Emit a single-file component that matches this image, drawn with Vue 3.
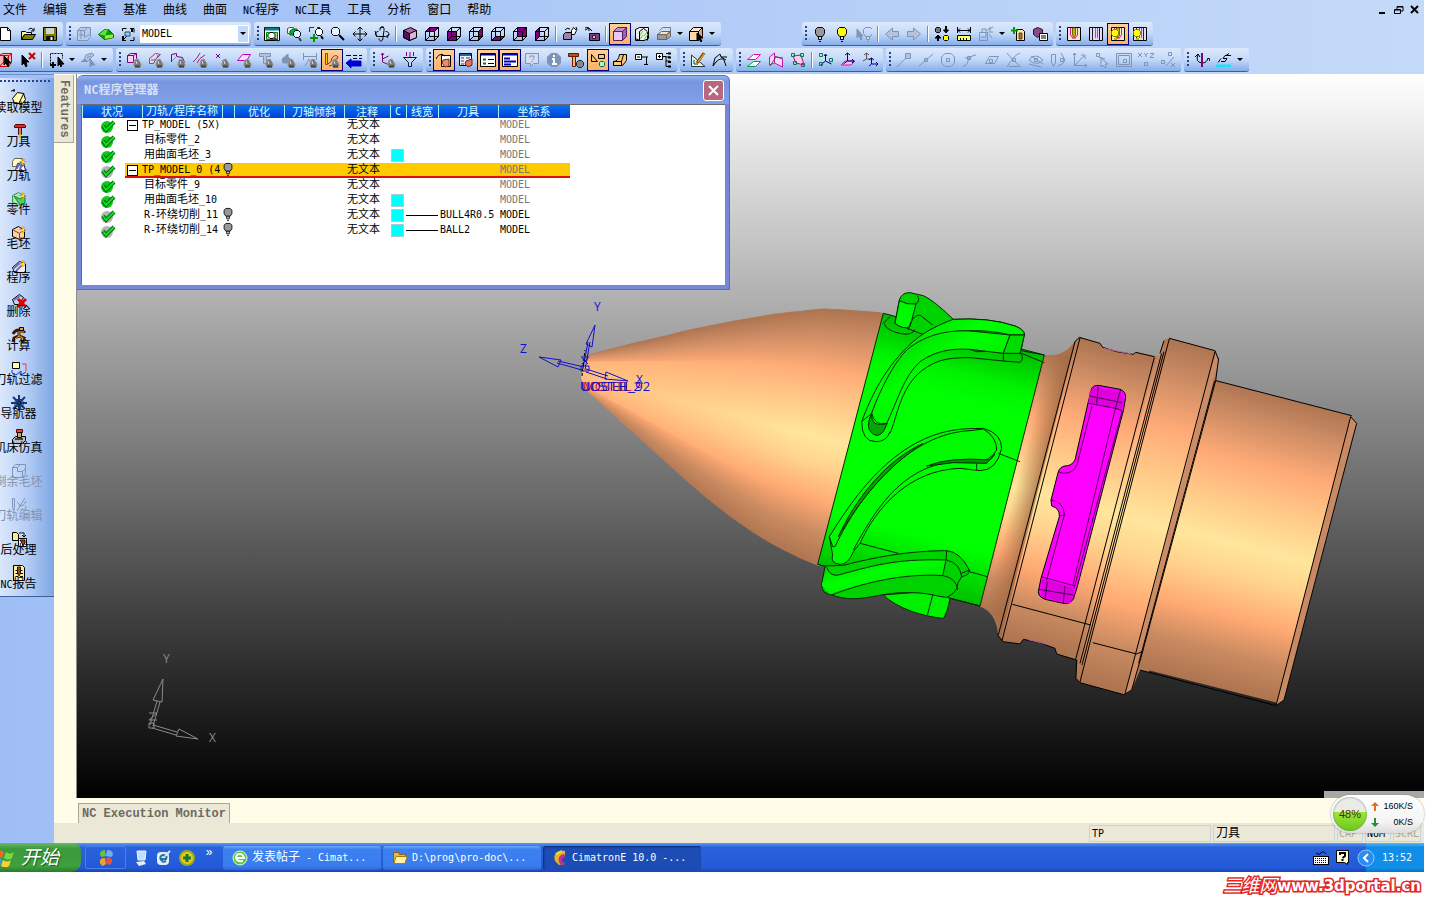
<script setup>
import { ref, h } from 'vue';

// Latin runs use a half-width mono face next to full-width Chinese glyphs
const Mix = (props) => props.t.split(/([\x20-\x7e]+)/).filter(Boolean)
  .map((s) => h('span', { class: /[\x20-\x7e]/.test(s) ? 'lat' : 'cjk' }, s));
Mix.props = ['t'];

const menus = ['文件', '编辑', '查看', '基准', '曲线', '曲面', 'NC程序', 'NC工具', '工具', '分析', '窗口', '帮助'];
const ucs = ref('MODEL');

// --- Icons (16x16) ---
const p = (d, fill = 'none', stroke = '#000', w = 1) =>
  `<path d="${d}" fill="${fill}" stroke="${stroke}" stroke-width="${w}"/>`;
const V = '#800080';
const G = '#7f93b8';
const FRONT = 'M1.5 5.5h9v9h-9z';
const TOP = 'M1.5 5.5l4-4h9l-4 4z';
const SIDE = 'M10.5 5.5l4-4v9l-4 4z';
const BACK = 'M5.5 1.5h9v9h-9z';
const LEFT = 'M1.5 5.5l4-4v9l-4 4z';
const BOTTOM = 'M1.5 14.5l4-4h9l-4 4z';
const wire = (face) => p(face, V) + p(FRONT + TOP + SIDE) + p('M5.5 1.5v9h9M5.5 10.5l-4 4');
const solid = (a, b, c, s = '#000') => p(FRONT, a, s) + p(TOP, b, s) + p(SIDE, c, s);
const tip = p('M9 8l3-1 3 5v2l-1 1.500H9.500L8 14v-2z', '#777', '#999') + p('M9 14.500h5', 'none', '#444', 2) + p('M10 9l1 3', 'none', '#ddd');
const bulb = (c, s = '#000') =>
  p('M5.5 1.5h5l2 2v4l-2 3h-5l-2-3v-4z', c, s) + p('M6.5 10.5h3v3h-3z', '#ddd', s) + p('M7 15.5h2', 'none', s);
const smallBulb = p('M1.5 5.5l2-2h3l2 2v3l-2 2h-3l-2-2z', '#ffff00', '#887700') + p('M4 13h3', 'none', '#bb0', 2);
const star = p('M12 1v7M8.5 4.5h7M10 2l4 5M14 2l-4 5', 'none', '#ff9800') + p('M11 4h2v2h-2z', '#ffee00', 'none');
const dot = (x, y, c = G) => p(`M${x - 1.5} ${y - 1.5}h3v3h-3z`, 'none', c);
const lens = p('M3.5 1.5h4l2 2v4l-2 2h-4l-2-2v-4z', '#e8f2ff') + p('M9 9l5 5', 'none', '#000', 2);

const icons = {
  new: p('M2.5 1.5h7l3 3v10h-10z', '#fff') + p('M9.5 1.5v3h3'),
  open: p('M1.5 13.500v-8h4l1 1h5v2h-7l-3 5z', '#ffff99') + p('M4.5 8.5h11l-3 5h-11z', '#808000') + p('M8.5 3.5q3-3 5 1M14 2v3h-3'),
  save: p('M1.5 1.5h13v13h-13z', '#808000') + p('M4 2h8v6H4z', '#cfd6d0', 'none') + p('M4 10h8v5H4z', '#111', 'none') + p('M9.5 11v3', 'none', '#fff', 2),
  part: p('M1.5 4.5l3-3h10v9l-3 4h-10z', '#b7cbea', G) + p('M1.5 4.5h7l3-3M5 5v8M8.5 4.5v7l5-3M3 9h5', 'none', G),
  load: p('M.5 8.500l6-5h4l5 5v3l-9 2z', '#00a000', '#006400') + p('M1 8.500l6-5h3l-3 6z', '#66e040', 'none') + p('M7 9.500l8-1v3l-8 1.500z', '#a8e830', 'none'),
  swapUcs: p('M2.5 5V2.5h4M14 11v3.5h-4M10 2.5h4v4M6 14.5H2.5v-4M2.5 14.5l4-4') + p('M5 6h5v4H5z', '#9cf', '#345') + p('M12 2v4M3 10v4', 'none', '#000', 2),
  zoomAll: p('M.5 1.5h15v13H.5z', '#fff') + p('M1 3h14', 'none', '#008080', 3) + p('M2.5 6.5h11v7h-11z', '#9edb9e', '#080') + p('M6 6.5h3l2 2v2l-2 2H6l-2-2v-2z', '#fff') + p('M10 12l4 3', 'none', '#333', 2),
  zoomPrev: p('M1.5 2.5l2-1h4l1 2v4h-7z', '#eee', '#555') + p('M4 5l3-2h4v6H4z', '#00b050', '#060') + p('M7.5 6.5l2-2h3l2 2v3l-2 2h-3l-2-2z', '#dff4ff') + p('M13 12l2 3', 'none', '#333', 2),
  zoomWin: p('M1.5 6V1.5H6M9 1.5h3', 'none', '#333') + p('M7.5 4.5l2-2h3l2 2v3l-2 2h-3l-2-2z', '#fff') + p('M13 10l2 3', 'none', '#000', 2) + p('M6 8v8M2 12h8', 'none', '#009a00', 2),
  zoom: lens,
  pan: p('M8 1v14M1 8h14M5.5 3.5L8 1l2.5 2.5M5.5 12.5L8 15l2.5-2.5M3.5 5.5L1 8l2.5 2.5M12.5 5.5L15 8l-2.5 2.5'),
  rotate: p('M6 4.5c-1-5 5-5 4 0l-1 7c0 5-4 4-4 1M4.5 5.5c-4 0-4 5 0 5l7 0c5-1 4-5 0-5M1 5l2 6M13 12l2-4M6 2l4-1'),
  iso: p('M1.5 4.5l7-3 6 3v7l-7 3-6-3z', '#a76aa7') + p('M1.5 4.5l6 3v7l-6-3z', '#5b1060') + p('M7.5 7.5l7-3v7l-7 3z', '#d8b8dc'),
  vTop: wire(TOP), vFront: wire(FRONT), vRight: wire(SIDE), vBottom: wire(BOTTOM), vBack: wire(BACK), vLeft: wire(LEFT),
  viewSave: p('M1.5 8.5l2-2h6v7h-8z', '#a080a8') + p('M9.5 4.5l2-3 3 3-2 4h-3z', '#fff') + p('M3 4q2-3 5-1M14 1l1 3', 'none', '#000'),
  camera: p('M5.5 7.5h10v7h-10z', '#804080') + p('M8.5 9.5h3v3h-3z', '#e0c0e0', '#301030') + p('M1 4l4-2v3M1 2q3-2 7 3'),
  shade: solid('#e8c8f0', '#c090d0', '#a060b0', '#502060'),
  hatch: p('M1.5 3.5l4-2h9v11l-4 2h-9z', '#eee') + p('M1.5 3.5v9l4 2v-9l4-3 4 3v9', 'none') + p('M6 13l3-4M6 9l3-4M10 14l4-6M10 10l4-5', 'none', '#6abf4a'),
  layers: p('M1.5 8.5h9v5h-9z', '#9a9a9a', '#666') + p('M1.5 8.5l4-3h9l-4 3z', '#ffe0c0', '#666') + p('M3.5 4.5l3-3h8v6', 'none', '#777') + p('M10.5 8.5l4-3v5l-4 3z', '#bba088', '#666'),
  pickBox: solid('#ffd8a8', '#ffe8cc', '#d8a878') + p('M9 7v8l2-2 2 3 1-1-2-3h3z', '#000'),
  bulbOff: bulb('#999'), bulbOn: bulb('#ffff00'),
  bulbPick: p('M1 3v9l2-2 2 4 1-1-1-3h2z', G, G) + '<g transform="translate(4 0)">' + bulb('none', G) + '</g>',
  left: p('M1.5 8l7-6v3.5h6v5h-6V14z', '#b5c4dc', G), right: p('M14.5 8l-7-6v3.5h-6v5h6V14z', '#b5c4dc', G),
  bulbSwap: p('M1.5 2.5l1-1h3l1 1v3l-1 1h-3l-1-1z', '#777') + p('M9.5 10.5l1-1h3l1 1v3l-1 1h-3l-1-1z', '#ffff00') + p('M12 0v4M4 10v5', 'none', '#000', 2) + p('M9.5 4h5L12 7zM1 12l3-3 3 3z', '#000'),
  measure: p('M1.5 1v6M14.5 1v6M2 4.5h12M4 2.5L2 4.5l2 2M12 2.5l2 2-2 2') + p('M1.5 9.5h13v5h-13z', '#ffff66') + p('M4.5 12v3M7.5 12v3M10.5 12v3'),
  explode: p('M1.5 6.5h8v8h-8zM4 6V3h4v8H3M9 4l6-3M10 6h5M11 8l3 4M12 1v4', 'none', G),
  addSheet: p('M6.5 3.5h6l2 2v9h-8z', '#ffe8b0') + p('M4 1v7M1 4.5h7', 'none', '#00a000', 2) + p('M9 7h3v6H9z', '#b07030', '#604010'),
  cubeList: p('M1.5 3.5l4-2 5 2v5l-5 3-4-3z', '#8a4a8a', '#301030') + p('M7.5 7.5h8v7h-8z', '#fff') + p('M9 10h5M9 12h5'),
  toolA: p('M1.5 1.5h13v13h-13z', '#f4e8d0') + p('M6.500 2h3v7l-1.500 3-1.500-3z', '#c8b000', '#776600') + p('M4.5 2v7l3 4M11.5 2v7l-3 4', 'none', '#e0109a'),
  toolB: p('M1.5 1.5h13v13h-13z', '#e6d8f8') + p('M4.5 1.5v13M11.5 1.5v13', 'none', '#222') + p('M7.500 2v10M9.5 2v10', 'none', '#c040c0'),
  pickRed: p('M1.5 3.5l3-2h9v9l-3 4h-9z', '#ffb0b0', '#d00000') + p('M1.5 3.5h9v11M1.5 14.5l12-13', 'none', '#d00000') + p('M6 4v9l2-2 2 4 1-1-1-3h3z', '#000'),
  unpick: p('M2 3v10l2-2 2 4 1-1-1-4h3z', '#000') + p('M9 1l6 6M15 1l-6 6', 'none', '#c80000', 2),
  pickWin: '<path d="M2.5 12.5v-11h12v5" fill="none" stroke="#000" stroke-dasharray="2 1"/>' + p('M5 10v6M2 13h6', 'none', '#000', 2) + p('M10 5v9l2-2 1 3 1-3h2z', '#000'),
  pickGray: p('M4 8l2-5 6-2 2 2-7 7-2-1M7 6l4-2', '#b5c4dc', G) + p('M1 10l4-3 3 3M10 7v8l2-2h3z', G, G),
  fSolid: p('M1.5 3.5l3-2h6v5l-3 4h-6z', '#f0d8f4', V) + p('M1.5 3.5h6v6M7.5 3.5l3-2', 'none', V) + tip,
  fFace: p('M1.5 6.5l6-5 5 1-5 5-2 4h-4z', '#ead8f0', '#705080') + p('M3 8q6 1 7-5', 'none', '#705080') + tip,
  fEdge: p('M1.5 10V2.5l5-1v3l6 1 2 5', 'none', V) + p('M2 9l5-5', 'none', '#8090c0') + tip,
  fCurve: p('M1 10q4-3 7-9M5 11q2-5 8-8', 'none', '#a02080') + tip,
  fPoint: p('M2 2l4 4M6 2L2 6', 'none', V) + tip,
  fPlane: p('M1.5 8.5l5-6h8l-4 6z', '#ffe0ff', '#c000c0') + tip,
  fText: p('M1.5 1.5h11v3h-4v7h-3v-7h-4z', '#b5c4dc', G) + tip,
  fHand: p('M2 7l6-5v3l5 4-5 2H3z', G, G) + tip,
  fDim: p('M1.5 1v7M14.5 1v7M2 4.5h12M3 14l4-7 3 7', 'none', G) + tip,
  fPath: p('M1.5 1.5h2v11h-2z', '#fc0', '#744') + p('M4 12q4-2 4-6 5-5 6 0M5 14q6-1 5-6l4-2', 'none', '#803060') + tip,
  fList: p('M0 3.5h5M7 3.5h4M13 3.5h3M7 6.5h4M13 6.5h3', 'none', '#004', 1) + p('M0 11l5-4v2h10v5H5v2z', '#0000d0', '#0000d0'),
  fUcs: p('M2.5 1v9l7 3M1 3l1.5-2L4 3M2.5 7l6-3', 'none', V) + tip,
  funnel: p('M1.5 5.5h13l-5 5v4h-3v-4z', '#ccdcf0', '#113') + p('M4.5 0v4M8 0v5M11.5 0v4', 'none', V),
  ncHand: p('M5.5 3.5h9v11h-9z', '#fff') + p('M0 7q3-6 7-4M5 2l4 2', 'none', '#000') + p('M7 8l6-1v7l-4 1-3-4z', '#e09070', '#802010'),
  ncCalc: p('M1.5 1.5h12v12h-12z', '#eef') + p('M2 3h11', 'none', '#26a', 2) + p('M3 6h3M3 9h3M3 12h3M8 6h4', 'none', '#345') + p('M8 9l6-2v6l-4 2-3-3z', '#e07060', '#802010'),
  panelA: p('M.5 1.5h15v13H.5z', '#fff') + p('M1 2.5h14', 'none', '#000080', 2) + p('M3 7.500h3M3 11.500h3', 'none', '#008000', 2) + p('M8 7.500h6M8 11.500h6', 'none', '#000'),
  panelB: p('M.5 1.5h15v13H.5z', '#fff') + p('M1 2.5h14M2 6.5h6M2 9.5h12M2 12.5h7', 'none', '#0000c0', 2),
  ask: p('M1.5 1.5h13v10h-5l-3 3v-3h-5z', '#d4e0f2', G) + p('M6 5.5V4h4v2.5L8 8M8 9v1.5', 'none', G),
  info: p('M5 1.5h6l3.5 3.5v6L11 14.5H5L1.5 11V5z', G, G) + p('M8 3v2M6 7h2v5M6 12h5', 'none', '#fff', 2),
  hammer: p('M.5 1.5h10v3H.5z', '#c05020', '#601800') + p('M4.5 4.5h3v10h-3z', '#ffb080', '#602000') + p('M10.5 8.5h3l2 2v3l-2 2h-3l-2-2v-3z', '#888', '#222'),
  shapes: p('M1.5 2.5v7h6zM8.5 2.5h6v4h-6z', '#ffc860') + p('M9.5 10.5l1-1h3l1 1v3l-1 1h-3l-1-1z', '#9fc', '#066'),
  wedge: p('M1.5 9.5q5 0 6-7h7v6l-4 5h-9z', '#ffc878') + p('M1.5 9.5h8l2-7M9.5 9.5v4'),
  tree1: p('M1.5 2.5h6v5h-6z', '#fff') + p('M3 5h3M8 5h6M12.5 5v7M10 12.5h4'),
  tree2: p('M.5 1.5h6v6h-6z', '#fff') + p('M2 4.5h3M3.5 3v3M7 4.5h3v10h4M10 1.5h4M10 5h4M10 9h4') + p('M12 1.5h3M12 5.5h3M12 10h3M12 14.5h3', 'none', '#000', 2),
  sketch: p('M1.5 3v11.5H15z', '#dfe', '#333') + p('M4 8v4h4', 'none', '#333') + p('M7 11l7-10', 'none', '#8a4a10', 3) + p('M8 10l6-8', 'none', '#ffcc33'),
  curve: p('M1 14l2-8 5-4 1 3 6 0M1 14l3-4q5-5 8-2l2 6M9 5l5 3'),
  planes: p('M1.5 7.5l6-5h7l-5 5z', '#fff', '#e010a0') + p('M1.5 14.5l6-5h7l-5 5z', '#fff', '#00a040'),
  planeCube: p('M1.5 13V5l5-4v10zM6.5 4l8 3v8l-8-4z', '#f8d8f8', '#d010b0') + p('M2 14l6-9 7 1', 'none', '#008040'),
  planeNet: p('M3 4l8-1 3 10-8-2z', '#fce', '#c000a0') + dot(3, 3, '#008040') + dot(12, 3, '#008040') + dot(5, 11, '#008040') + dot(13, 13, '#008040'),
  ucsA: p('M7.5 2v7l6 3M7.5 9l-5 4M6 4l1.5-2L9 4', 'none', '#000090') + dot(3, 12, '#008040') + dot(13, 8, '#008040') + dot(3, 3, '#008040'),
  ucsB: p('M1 13l4-4h10l-4 4z', '#fbe', '#e010a0') + p('M7.5 1v8h6M7.5 9l-4 3M5 3l2.5-2L10 3M12 7l2 2-2 2', 'none', '#000090'),
  ucsC: p('M4.5 1v6h6M2 3l2.5-2L7 3M4.5 7L1 9', 'none', '#555') + p('M9.5 6v6h6M7 8l2.5-2L12 8M9.5 12L7 14M14 10l2 2-2 2', 'none', '#000090'),
  g1: p('M1 15L10 6', 'none', G) + p('M9.5 1.5h5v5h-5z', '#b5c4dc', G), g2: p('M1 14L15 2', 'none', G) + dot(8, 8),
  g3: p('M5 1.5h6l3.5 3.5v6L11 14.5H5L1.5 11V5z', 'none', G) + dot(8, 8), g4: p('M1 14q4 0 5-5t8-6M3 6h5', 'none', G) + dot(7, 6),
  g5: p('M1.5 11.5l4-7h9l-4 7z', 'none', G) + dot(7, 9), g6: p('M1 1q8 10 14 14M1 15Q8 3 14 1M3 14.500h10', 'none', G) + dot(8, 8),
  g7: p('M1 12l12 3M1 8q6-8 14 0-6 7-14 0M3 4l12 8', 'none', G) + dot(8, 8), g8: p('M1.5 2.5h4v8l-2 4-2-4zM8 14q6-2 7-6l-4-7', 'none', G) + dot(12, 8),
  g9: p('M2.5 1v12.5H15M2.5 13.5L12 4M1 3l1.5-2L4 3M13 12l2 1.5-2 1.5M9 3h4v4', 'none', G), g10: dot(4, 3) + p('M5 5l6 2M7 6v9l2-2 2 3 1-1-1-3h3z', '#c4d2ea', G),
  g11: p('M.5 1.5h15v13H.5zM2.5 3.5h11v9h-11z', 'none', G) + dot(9, 9), g12: p('M0 1l4 4M4 1L0 5M6 1l2 2 2-2M8 3v2M12 1.5h4l-4 4h4', 'none', G) + dot(8, 12),
  g13: dot(3, 10) + dot(10, 2) + p('M6 14l8-9M11 11l4 4M15 11l-4 4', 'none', G),
  spin: p('M4 3q-3 7 4 8 5 0 6-5M1 5l3-3 2 3M13 8l2-2 1 3') + p('M8 1v14', 'none', V, 2),
  steps: p('M5 9.5h4l2-3H7M7 6.5l2-3h6M2 10.5l3-4M10 3.5l3-2') + p('M0 14h15', 'none', '#20e0f8', 3),

  // side bar
  model: p('M1.5 9.5l5-6 6 1 2 6-3 4h-8z', '#ffffb0') + p('M8 14l5-10M0 2l4-1M3 0v3'),
  tool: p('M3.5 2.5l1-1h9l1 1v2h-11z', '#d03020', '#600') + p('M7.5 4.5h3v7h-3z', '#d08060', '#511') + p('M9 11v4', 'none', '#cc0', 2),
  path: p('M1.5 4.5l2-3h8v8h-10z', '#ffffc0', '#665') + p('M4.5 13.5l2-7 6-1 2 8z', '#fff', '#223') + p('M6 12q0-4 5-5M9 13q0-4 4-5', 'none', '#66b', 2) + star,
  piece: p('M1.5 4.5l6-3 6 4v7l-5 2-7-3z', '#a8e8b0', '#395') + p('M3 5l6 3 5-3v7l-5 2z', '#50d060', '#273') + star,
  stock: p('M1.5 4.5l6-3 6 4v7l-5 2-7-3z', '#ffd0a0') + p('M1.5 4.5l7 4v6M8.5 8l5-3', 'none', '#744') + star,
  proc: p('M1.5 8.5l7-6 6 2v9h-11z', '#eee') + p('M2 10l7-6M5 12l6-6', 'none', '#7070c8', 2) + star,
  del: p('M1.5 6.5l7-5 4 3-5 7h-4z', '#d0d0f0') + p('M3 7l6-4', 'none', '#7070c8', 2) + p('M7 6l8 8M15 6l-8 8', 'none', '#e00000', 3),
  run: p('M8 3q-4 0-6 4M8 3q4 3 6 1M8 4v5l5 2-2 4M8 9l-5 2-1 4', 'none', '#3a1a00', 3) + p('M8 4v5l4 2-1 3M8 9l-4 3M9 5l4 0', 'none', '#f0a030') + p('M8.500 .5h4v3h-4z', '#f0a030'),
  filter: p('M1.5 1.5h7v6h-7z', '#ffffb0') + p('M11 3h4v7', 'none', '#d04060') + p('M1 9v3l4 2 5-4v4l5-3', 'none', '#1030d0'),
  helm: p('M8 0v16M0 8h16M2 2l12 12M14 2L2 14', 'none', '#123a7a', 2) + p('M5 4.5h6l1 2v4l-1 1H5l-1-1v-4z', 'none', '#123a7a') + p('M7 7h2v2H7z', '#fff', '#000'),
  machine: p('M1.5 10.5l3-3h10v4l-3 3h-10z', '#bbb') + p('M5.5 .5h6v3h-6z', '#e05030', '#600') + p('M6.5 3.5h4v5h-4z', '#c8a860') + p('M4 9h8v2H4z', '#444', 'none'),
  rest: p('M1.5 4.5l3-3h10v9l-3 4h-10z', 'none', G) + p('M1.5 4.5h5v4h5v6M6.5 4.5l3-3M11.5 8.5l3-3', 'none', G),
  edit: p('M1.5 1.5h2v9l-1 3-1-3zM6 14l8-13M8 9q6 0 7-5M6 5l3 3M10 12q5 2 5-3', 'none', G),
  post: p('M1.5 1.5h4l2 2v6h-6z', '#ffe880') + p('M8 2h5v4M11 4l2 2 2-2M7.5 7.5h8v8h-8z', '#fff') + p('M9 9h5v3l-2 3-1-3z', '#a04020'),
  report: p('M2.5 .5h9l2 2v13h-11z', '#fff0a0') + p('M4.5 5.5h7M4.5 8.5h3M9 8.5h3M4.5 11.5h3M9 11.5h3') + p('M6.500 2h3v6L8 11 6.500 8z', '#905020', '#311'),
};

// "-" separator, "v" drop arrow, "*" prefix for a pressed button
const row1 = [
  { edge: true, items: ['new', 'open', 'save'] },
  { select: true, items: ['part', 'load', 'swapUcs'] },
  { items: ['zoomAll', 'zoomPrev', 'zoomWin', 'zoom', 'pan', 'rotate', '-', 'iso', 'vTop', 'vFront', 'vRight', 'vBottom', 'vBack', 'vLeft', '-', 'viewSave', 'camera', '-', '*shade', 'hatch', 'layers', 'v', 'pickBox', 'v'] },
  { apart: true, items: ['bulbOff', 'bulbOn', 'bulbPick', '-', 'left', 'right', '-', 'bulbSwap', 'measure', 'explode', 'v', 'addSheet', 'cubeList'] },
  { items: ['toolA', 'toolB', '*toolA+', 'toolB+'] },
];
const row2 = [
  { edge: true, items: ['pickRed', 'unpick', '-', 'pickWin', 'v', 'pickGray', 'v'] },
  { items: ['fSolid', 'fFace', 'fEdge', 'fCurve', 'fPoint', 'fPlane', 'fText', 'fHand', 'fDim', '*fPath', 'fList'] },
  { items: ['fUcs', 'funnel'] },
  { items: ['*ncHand', 'ncCalc', '*panelA', '*panelB', 'ask', 'info', 'hammer', '*shapes', 'wedge', 'tree1', 'tree2'] },
  { items: ['sketch', 'curve'] },
  { items: ['planes', 'planeCube', 'planeNet', '-', 'ucsA', 'ucsB', 'ucsC'] },
  { items: ['g1', 'g2', 'g3', 'g4', 'g5', 'g6', 'g7', 'g8', 'g9', 'g10', 'g11', 'g12', 'g13'] },
  { items: ['spin', 'steps', 'v'] },
];
const iconOf = (name) => {
  const id = name.replace('*', '');
  return id.endsWith('+') ? icons[id.slice(0, -1)] + smallBulb : icons[id];
};

const sideItems = [
  ['model', '读取模型'], ['tool', '刀具'], ['path', '刀轨'], ['piece', '零件'], ['stock', '毛坯'],
  ['proc', '程序'], ['del', '删除'], ['run', '计算'], ['filter', '刀轨过滤'], ['helm', '导航器'],
  ['machine', '机床仿真'], ['rest', '剩余毛坯', true], ['edit', '刀轨编辑', true], ['post', '后处理'], ['report', 'NC报告'],
];

// --- Program table ---
const rows = [
  { done: true, tree: true, name: 'TP_MODEL (5X)' },
  { done: true, name: '目标零件_2' },
  { done: true, name: '用曲面毛坯_3', color: true },
  { tree: true, name: 'TP_MODEL_0 (4', lamp: true, selected: true },
  { done: true, name: '目标零件_9' },
  { done: true, name: '用曲面毛坯_10', color: true },
  { name: 'R-环绕切削_11', lamp: true, color: true, line: true, cutter: 'BULL4R0.5' },
  { name: 'R-环绕切削_14', lamp: true, color: true, line: true, cutter: 'BALL2' },
];
const dialogOpen = ref(true);

// --- Nose of the part: thin slices across its axis ---
const profile = [[-6, 16], [0, 22], [30, 37], [60, 52], [90, 68], [130, 87], [168, 104], [214, 121], [245, 127], [280, 133]];
const radius = (u) => {
  const i = Math.max(1, profile.findIndex((q) => q[0] >= u));
  const [a, b] = [profile[i - 1], profile[i]];
  return a[1] + ((b[1] - a[1]) * (u - a[0])) / (b[0] - a[0]);
};
const slices = Array.from({ length: 142 }, (_, i) => ({ u: -6 + i * 2, r: radius(-6 + i * 2) }));

const tasks = [
  { icon: 'ie', text: '发表帖子 - Cimat...' },
  { icon: 'dir', text: 'D:\\prog\\pro-doc\\...' },
  { icon: 'cim', text: 'CimatronE 10.0 -...', active: true },
];
</script>

<template>
  <div class="page">
    <div class="shell">
      <header class="top">
        <nav class="menu">
          <button v-for="m in menus" :key="m" type="button"><Mix :t="m" /></button>
          <div class="win-ctl">
            <button type="button" aria-label="minimize"><svg width="10" height="10"><path d="M1 8h6" stroke="#000" stroke-width="2" /></svg></button>
            <button type="button" aria-label="restore"><svg width="10" height="10"><path d="M3 4V1.5h6V6H7M3 2h6M.5 4.5h6v4h-6zM1 5h6" fill="none" stroke="#000" /></svg></button>
            <button type="button" aria-label="close"><svg width="10" height="10"><path d="M1 1l7 7M8 1l-7 7" stroke="#000" stroke-width="2" /></svg></button>
          </div>
        </nav>
        <div v-for="(row, r) in [row1, row2]" :key="r" class="bars">
          <div v-for="(bar, b) in row" :key="b" class="bar" :class="{ edge: bar.edge, apart: bar.apart }">
            <i v-if="!bar.edge" class="grip"></i>
            <template v-for="(it, k) in bar.items" :key="k">
              <i v-if="it === '-'" class="sep"></i>
              <button v-else-if="it === 'v'" type="button" class="drop" aria-label="more"></button>
              <button v-else type="button" class="tb" :class="{ on: it[0] === '*' }" :aria-label="it.replace('*', '')">
                <svg viewBox="0 0 16 16" width="16" height="16" v-html="iconOf(it)"></svg>
              </button>
            </template>
            <div v-if="bar.select" class="combo">
              <select v-model="ucs" aria-label="UCS"><option>MODEL</option></select>
              <i class="drop"></i>
            </div>
          </div>
        </div>
      </header>

      <div class="body">
        <aside class="side">
          <div class="side-bar">
            <button v-for="[icon, label, off] in sideItems" :key="label" type="button" :class="{ off }">
              <svg viewBox="0 0 16 16" width="16" height="16" v-html="icons[icon]"></svg>
              <span><Mix :t="label" /></span>
            </button>
          </div>
        </aside>

        <div class="work">
          <div class="work-row">
            <div class="features"><button type="button">Features</button></div>
            <main class="canvas">
              <svg class="scene" viewBox="77 74 1347 724">
                <defs>
                  <linearGradient id="skin" x1="0" y1="0" x2="0" y2="1">
                    <stop offset="0" stop-color="#ad7450" /><stop offset=".08" stop-color="#c48660" />
                    <stop offset=".25" stop-color="#ffab77" /><stop offset=".38" stop-color="#ffc988" />
                    <stop offset=".52" stop-color="#ffe69c" /><stop offset=".62" stop-color="#ffd48e" />
                    <stop offset=".76" stop-color="#ffa973" /><stop offset=".88" stop-color="#c98a60" />
                    <stop offset="1" stop-color="#ad7450" />
                  </linearGradient>
                  <linearGradient id="leaf" gradientUnits="userSpaceOnUse" x1="1360" y1="160" x2="1170" y2="915">
                    <stop offset="0" stop-color="#00b800" /><stop offset=".16" stop-color="#00f400" />
                    <stop offset=".25" stop-color="#00ff00" /><stop offset=".8" stop-color="#00ff00" />
                    <stop offset="1" stop-color="#00c000" />
                  </linearGradient>
                  <linearGradient id="fin" x1="0" y1="0" x2="1" y2="1">
                    <stop offset="0" stop-color="#00c800" /><stop offset=".4" stop-color="#00ff00" /><stop offset="1" stop-color="#00d800" />
                  </linearGradient>
                  <linearGradient id="tipShade"><stop offset="0" stop-color="#ffb87c" stop-opacity=".9" /><stop offset="1" stop-color="#ffb87c" stop-opacity="0" /></linearGradient>
                  <linearGradient id="neck" gradientUnits="userSpaceOnUse" x1="445" y1="0" x2="470" y2="0">
                    <stop offset="0" stop-color="#a06840" stop-opacity="0" /><stop offset="1" stop-color="#a06840" stop-opacity=".85" />
                  </linearGradient>
                  <clipPath id="noseClip">
                    <path d="M587 355C640 341 700 325 745 316C800 305 845 304 884 313L819 566C775 549 740 527 690 484L588 392L581 378Z" />
                  </clipPath>
                  <clipPath id="ringClip">
                    <path d="M253 105Q315 112 345 62L358 52L420 70L428 82L470 95L520 103L527 97L600 110L612 60L628 55L765 92L776 120L767 182L1175 287L1190 310L972 1140L948 1157L540 1050L515 1110L492 1124L360 1088L348 1075L352 1020L290 1002L285 985L240 967L190 958L180 972L130 965L115 945Q108 875 58 858Z" />
                  </clipPath>
                </defs>

                <g clip-path="url(#noseClip)">
                  <g transform="translate(585 373) rotate(14.2)">
                    <rect v-for="s in slices" :key="s.u" :x="s.u" :y="-s.r" width="3" :height="s.r * 2" fill="url(#skin)" />
                    <path d="M-6 -10L220 -70V70L-6 10Z" fill="url(#tipShade)" />
                  </g>
                </g>

                <!-- rings and rear cylinder -->
                <g transform="translate(960 320) scale(.33333)" stroke-width="3" fill="none" stroke="#000">
                  <g clip-path="url(#ringClip)" stroke="none">
                    <g transform="translate(-1125 159) rotate(14.2) scale(3)">
                      <rect x="430" y="-180" width="190" height="360" fill="#b37a55" />
                      <rect x="438" y="-134" width="34" height="268" fill="url(#skin)" />
                      <rect x="445" y="-160" width="25" height="320" fill="url(#neck)" />
                      <rect x="468" y="-156" width="88" height="312" fill="url(#skin)" />
                      <rect x="550" y="-178" width="58" height="356" fill="url(#skin)" />
                      <rect x="606" y="-150" width="156" height="300" fill="url(#skin)" />
                    </g>
                  </g>
                  <path d="M768 95L776 120L545 1005L515 1110L495 1122Z" fill="#cb8c66" stroke="none" />
                  <path d="M1172 290L1190 310L972 1140L948 1157Z" fill="#c88a62" />
                  <path d="M345 65L358 52L420 70L428 82L470 95L520 103L527 97L583 110M112 945L130 965L180 972L190 958L240 968L285 985L290 1002L350 1020M768 182L1175 287M540 1050L948 1157" />
                  <path d="M345 65L115 945M360 54L126 962M583 112L347 1018M605 100L360 1030M612 95L366 1035M612 62L600 100M628 56L392 960L360 1086M350 1020L348 1075L360 1088M628 55L765 92L776 120M765 95L495 1122M776 115L767 182M764 182L536 1030M767 182L545 1005L515 1110L492 1124L360 1088" />
                  <path d="M157 853L392 915M398 968L530 1002L550 993" />
                  <path d="M430 85L515 102M205 959L270 975" stroke="#c060a0" />
                  <path d="M395 205Q402 195 415 196L480 208Q497 213 497 232L490 272L352 800L340 838Q330 852 315 851L255 838Q235 830 235 815L243 775L298 590Q300 565 275 558L273 540L295 455Q300 440 315 438Q335 438 345 420L385 245Z" fill="#ff00ff" />
                  <path d="M388 218L398 203L482 213L490 245L484 272L385 250ZM243 775L335 800L345 820L330 850L245 832Z" fill="#df00df" stroke="none" />
                  <path d="M385 250L468 265L490 275M388 228L486 248M415 196L410 250M482 208L465 270L338 798M396 258L352 430Q345 460 310 460L295 455M486 275L342 805M273 540Q312 545 313 585L260 780M313 585L298 588M243 770L345 798M236 808L340 825M262 785L255 838M315 798L310 850" stroke-width="2" />
                </g>

                <!-- bladed section -->
                <g transform="translate(510 280) scale(.33333)" stroke-width="3" fill="none" stroke="#002800">
                  <path d="M1120 100L1603 225L1410 978L923 853Z" fill="url(#leaf)" />
                  <path d="M1120 945C1160 985 1240 1010 1300 1015Q1312 1000 1320 955L1300 930Z" fill="#00f000" />
                  <path d="M1268 945L1252 1006" />
                  <path d="M1155 130L1168 60Q1175 37 1200 38L1240 47Q1270 60 1330 118Q1440 112 1515 138Q1545 150 1543 165L1533 212L1400 215L1230 160Z" fill="#00d200" />
                  <path d="M1155 130L1168 62Q1190 75 1218 72L1200 140Q1180 150 1155 130Z" fill="#00f800" />
                  <path d="M1222 47Q1232 60 1218 72M1120 130L1140 110M1122 130Q1130 155 1180 162Q1205 165 1215 150M1195 150Q1205 105 1230 105L1268 135" />
                  <path d="M1055 425C1090 330 1130 270 1165 230C1200 190 1240 150 1330 118Q1440 112 1515 138Q1545 150 1543 165L1500 165C1450 150 1310 140 1250 180C1170 220 1110 330 1085 400Z" fill="url(#fin)" />
                  <path d="M1085 400C1110 330 1150 250 1190 210C1250 160 1320 150 1380 153L1500 165L1480 220L1380 208C1330 205 1280 210 1230 245C1180 290 1160 370 1130 430Q1095 440 1085 400Z" fill="url(#fin)" />
                  <path d="M1500 165L1543 165L1530 220L1480 220Z" fill="#00dc00" />
                  <path d="M1140 460C1160 420 1170 310 1250 262C1290 235 1330 233 1380 233L1480 243L1530 247Q1545 235 1530 218L1603 248M1480 220L1480 243M1533 212L1603 225" />
                  <path d="M1055 425Q1055 485 1098 485Q1130 485 1140 455" />
                  <path d="M1085 400Q1070 430 1078 450Q1098 480 1120 455L1132 430Q1110 437 1095 430Q1083 420 1085 400Z" fill="#00a800" />

                  <path d="M958 770C1050 620 1180 450 1380 446L1420 445Q1475 460 1475 505Q1460 572 1410 572L1350 565C1200 570 1100 680 1050 790L1030 815Q1015 853 990 853Q960 850 968 825Z" fill="#00fa00" />
                  <path d="M975 800C1050 640 1200 460 1380 452L1420 447Q1460 470 1460 510Q1440 545 1400 545L1330 545C1170 560 1090 700 1030 810" />
                  <path d="M985 770C1040 650 1130 540 1240 490C1130 560 1050 660 985 770Z" fill="#00a000" />
                  <path d="M1250 558Q1320 530 1440 540L1455 522L1430 550L1330 548Z" fill="#009000" />
                  <path d="M958 770L968 800L975 800M1465 520L1530 545M1400 550L1400 570M1050 790L1165 820" />

                  <path d="M945 858L935 915Q935 940 965 945C1050 975 1100 935 1200 938C1260 938 1280 950 1310 952Q1345 935 1343 910L1355 890Q1380 885 1378 870Q1350 815 1310 812C1200 812 1100 830 1000 856Z" fill="#00d200" />
                  <path d="M950 862Q960 890 985 885C1080 860 1150 835 1310 840L1298 888C1200 880 1080 900 960 942L935 915Z" fill="url(#fin)" stroke="none" />
                  <path d="M950 862Q960 890 985 885C1080 860 1150 835 1310 840Q1350 850 1355 890M965 945C1080 900 1200 880 1300 887Q1340 895 1343 930M1310 812L1308 840L1298 888M1378 875L1432 890M1355 880L1378 870M1310 952L1410 978" />
                </g>

                <!-- part coordinate system -->
                <g fill="none" stroke="#1010c8">
                  <path d="M585 370L590 342M583 368L588 342M595 325L586 344L592 347ZM582 370L557 363M584 367L558 361M539 357L561 360L558 367ZM586 369L608 376M586 372L607 379M606 372L628 381L605 379ZM581 357h8M582 364l6-6M582 358l6 6M581 366h8v5h-8z" />
                  <path d="M582 376L585 350" stroke="#000" stroke-dasharray="3 2" />
                </g>
                <g class="ax" fill="#1010c8">
                  <text x="594" y="311">Y</text><text x="520" y="353">Z</text><text x="636" y="384">X</text>
                  <text x="580" y="391" class="ucs">UCSTEIL_92</text><text x="583" y="391" class="ucs" fill="#c01040">MCSTEL</text><text x="581" y="391" class="ucs">UOST H_2</text>
                </g>

                <!-- view triad -->
                <g fill="none" stroke="#8a8a8a">
                  <path d="M150 725L157 701M153 726L160 702M163 679L153 700L162 702ZM153 725L177 732M152 728L176 735M179 729L198 739L176 736ZM149 723h5v5h-5zM149 713h8l-8 7h8" />
                </g>
                <g class="ax" fill="#8a8a8a"><text x="163" y="663">Y</text><text x="209" y="742">X</text></g>
              </svg>

              <section v-if="dialogOpen" class="dialog">
                <div class="dlg-title">
                  <h1><Mix t="NC程序管理器" /></h1>
                  <button type="button" aria-label="关闭" @click="dialogOpen = false">
                    <svg width="13" height="13"><path d="M2 2l9 9M11 2l-9 9" stroke="#fff" stroke-width="2" /></svg>
                  </button>
                </div>
                <div class="dlg-body">
                  <table>
                    <colgroup>
                      <col class="w43"><col class="w17"><col class="w80"><col class="w12"><col class="w50">
                      <col class="w60"><col class="w46"><col class="w16"><col class="w32"><col class="w60"><col class="w72">
                    </colgroup>
                    <thead>
                      <tr>
                        <th colspan="2">状况</th><th><Mix t="刀轨/程序名称" /></th><th></th><th>优化</th><th>刀轴倾斜</th>
                        <th>注释</th><th><Mix t="C" /></th><th>线宽</th><th>刀具</th><th>坐标系</th>
                      </tr>
                    </thead>
                    <tbody>
                      <tr v-for="row in rows" :key="row.name" :class="{ sel: row.selected }">
                        <td class="st">
                          <svg width="16" height="15" viewBox="0 0 16 15">
                            <circle cx="7" cy="9" r="6" :fill="row.done ? '#10c818' : '#b4b4b4'" />
                            <path d="M3 8l3 4 8-8" fill="none" stroke="#006a10" stroke-width="4" />
                            <path d="M3 8l3 4 8-8" fill="none" stroke="#10e020" stroke-width="2" />
                          </svg>
                        </td>
                        <td><i v-if="row.tree" class="node"></i></td>
                        <td class="nm" :class="{ child: !row.tree }"><Mix :t="row.name" /></td>
                        <td class="lamp"><svg v-if="row.lamp" width="12" height="13" viewBox="2 1 12 15" v-html="icons.bulbOff"></svg></td>
                        <td></td><td></td>
                        <td class="note">无文本</td>
                        <td><i v-if="row.color" class="swatch"></i></td>
                        <td><i v-if="row.line" class="stroke"></i></td>
                        <td class="cut"><Mix :t="row.cutter || ''" /></td>
                        <td class="cs" :class="{ dim: !row.cutter }"><Mix t="MODEL" /></td>
                      </tr>
                    </tbody>
                  </table>
                </div>
              </section>
            </main>
          </div>
          <div class="monitor"><button type="button">NC Execution Monitor</button></div>
          <div class="status">
            <span class="wide"><Mix t="TP" /></span><span class="wide">刀具</span>
            <span class="key off"><Mix t="CAP" /></span><span class="key"><Mix t="NUM" /></span><span class="key off"><Mix t="SCRL" /></span>
          </div>
        </div>

        <div class="net">
          <b>48%</b>
          <div>
            <p><svg width="8" height="9"><path d="M0 4l4-4 4 4H5v5H3V4z" fill="#e07028" /></svg>160K/S</p>
            <p><svg width="8" height="9"><path d="M0 5l4 4 4-4H5V0H3v5z" fill="#2a8a3a" /></svg>0K/S</p>
          </div>
        </div>
      </div>

      <footer class="taskbar">
        <button type="button" class="start">
          <svg width="17" height="18" viewBox="0 0 17 18">
            <path d="M0 3q4-3 7 0L5 9Q2 6-2 9z" fill="#f06a30" /><path d="M9 3q4 3 8 0l-2 6q-4 3-8 0z" fill="#7ad840" />
            <path d="M-2 11q4-3 7 0l-2 6q-3-2-6 0z" fill="#4a90f8" /><path d="M6 11q4 3 8 0l-2 6q-3 3-8 0z" fill="#ffd030" />
          </svg>
          <em>开始</em>
        </button>
        <button type="button" class="quick" aria-label="msn">
          <svg width="18" height="18" viewBox="0 0 18 18"><path d="M8 1c-5 0-7 5-3 7l4-1z" fill="#6ac040" /><path d="M10 1c5-1 8 5 4 7l-5-1z" fill="#70b0f8" /><path d="M8 9c-6-1-7 6-2 8l3-2z" fill="#f0a030" /><path d="M10 8c6 0 7 6 2 8l-3-2z" fill="#e85040" /></svg>
        </button>
        <div class="launch">
          <svg width="16" height="16" viewBox="0 0 16 16"><path d="M4 1h9l-1 9H5z" fill="#bfe0ff" stroke="#e8f4ff" /><path d="M3 12l8-1 2 3-7 2z" fill="#e8eef8" /></svg>
          <svg width="16" height="16" viewBox="0 0 16 16"><rect x="1" y="2" width="12" height="13" rx="4" fill="#e0f0f8" /><path d="M5 10q-2-4 2-5 5 0 3 4H5q1 4 5 2" fill="none" stroke="#2070a0" stroke-width="2" /><path d="M9 6l5-5" stroke="#d8e8f8" stroke-width="2" /></svg>
          <svg width="16" height="16" viewBox="0 0 16 16"><circle cx="8" cy="8" r="7" fill="#f0c818" stroke="#90b020" stroke-width="2" /><path d="M8 4v8M4 8h8" stroke="#187830" stroke-width="3" /></svg>
        </div>
        <span class="more">»</span>
        <button v-for="t in tasks" :key="t.icon" type="button" class="task" :class="{ active: t.active }">
          <svg v-if="t.icon === 'ie'" width="16" height="16" viewBox="0 0 16 16"><circle cx="8" cy="8" r="7" fill="#5cc840" stroke="#d8ffd0" /><path d="M4 8h8q-1-4-4-4-4 0-4 4 1 4 7 3" fill="none" stroke="#fff" stroke-width="2" /></svg>
          <svg v-else-if="t.icon === 'dir'" width="16" height="16" viewBox="0 0 16 16"><path d="M1.5 2.5h5l1 2h6v9h-12z" fill="#e8b840" stroke="#8a6410" /><path d="M2 13.5l2-7h11l-2 7z" fill="#fff0a0" stroke="#a87a18" /></svg>
          <svg v-else width="16" height="16" viewBox="0 0 16 16"><path d="M13 1C4 0 1 5 3 11l4 4 6-1c-6-2-6-6 0-9z" fill="#f0b020" /><path d="M12 4C6 5 5 11 9 15l5-1c-5-2-5-5-1-7z" fill="#c03090" /><path d="M4 4l6-3" stroke="#d8e040" stroke-width="2" /></svg>
          <span><Mix :t="t.text" /></span>
        </button>
        <div class="tray-icons">
          <svg width="16" height="14"><path d="M3 2q3 3 5 0t5 1" fill="none" stroke="#000" /><rect x=".5" y="5.5" width="15" height="8" fill="#fff" stroke="#000" /><path d="M2 7.5h12M2 9.5h12M2 11.5h12" stroke="#000" stroke-dasharray="1 1" /></svg>
          <svg width="14" height="15"><path d="M.5 .5h12v12h-1v2l-3-2h-8z" fill="#ffffe0" stroke="#000" /><path d="M4 5V3h5v3L6.5 8M6.5 9v2" fill="none" stroke="#000" stroke-width="2" /></svg>
        </div>
        <div class="tray">
          <button type="button" aria-label="hidden icons"><svg width="18" height="18"><circle cx="9" cy="9" r="8" fill="#2a8cf0" stroke="#8ac8ff" /><path d="M11 5L7 9l4 4" fill="none" stroke="#fff" stroke-width="2" /></svg></button>
          <time>13:52</time>
        </div>
      </footer>
    </div>
    <div class="mark"><i>三维网</i><b>www.3dportal.cn</b></div>
  </div>
</template>

<style>
body {
  margin: 0;
  background: #fff;
}

.lat {
  font-family: "DejaVu Sans Mono", monospace;
  font-size: 10px;
  white-space: pre;
}
</style>

<style scoped>
.page {
  min-height: 100vh;
  display: flex;
  flex-direction: column;
  font: 12px/15px "Liberation Sans", "Noto Sans CJK SC", sans-serif;
  color: #000;
  overflow: hidden;
}

button {
  border: 0;
  padding: 0;
  margin: 0;
  background: none;
  font: inherit;
  color: inherit;
}

svg {
  display: block;
  flex: none;
}

.shell {
  flex: 1;
  margin-right: 16px;
  display: flex;
  flex-direction: column;
  background: linear-gradient(90deg, #9ebef5, #c4daf9);
}

/* --- menu and tool bars --- */
.menu {
  display: flex;
  gap: 16px;
  height: 22px;
  align-items: center;
  padding: 0 4px 2px 3px;
  box-sizing: border-box;
}

.win-ctl {
  margin-left: auto;
  display: flex;
  gap: 6px;
}

.bars {
  display: flex;
  gap: 3px;
  height: 26px;
}

.bar {
  display: flex;
  align-items: center;
  height: 24px;
  box-sizing: border-box;
  padding-right: 2px;
  border-radius: 3px;
  border-bottom: 1px solid #3b619c;
  background: linear-gradient(#dde9fc, #c3d9f8 50%, #86aeea);
}

.bar.edge {
  margin-left: -5px;
}

.bar.apart {
  margin-left: 78px;
}

.grip {
  width: 2px;
  height: 16px;
  margin: 0 2px 0 3px;
  background: repeating-linear-gradient(#27418a 0 2px, transparent 2px 4px);
}

.sep {
  width: 1px;
  height: 16px;
  margin: 0 2px;
  background: #6a8ccb;
  border-right: 1px solid #fff;
}

.tb {
  width: 22px;
  height: 22px;
  display: flex;
  align-items: center;
  justify-content: center;
  box-sizing: border-box;
}

.tb.on {
  border: 1px solid #000080;
  background: linear-gradient(#ffd099, #ffb060);
}

.drop {
  width: 10px;
  height: 22px;
  display: flex;
  align-items: center;
  justify-content: center;
}

.drop:last-child {
  margin-right: 2px;
}

.drop::after {
  content: "";
  border: 3px solid transparent;
  border-top-color: #000;
  border-bottom: 0;
}

.combo {
  display: flex;
  height: 18px;
  width: 109px;
  margin-left: 1px;
  background: #fff;
}

.combo select {
  appearance: none;
  flex: 1;
  border: 0;
  padding: 0 2px;
  background: #fff;
  color: #000;
  font: 10px "DejaVu Sans Mono", monospace;
}

.combo .drop {
  height: 16px;
  margin: 1px;
  background: #c3d9f8;
}

/* --- body --- */
.body {
  flex: 1;
  display: flex;
  position: relative;
}

.side {
  width: 54px;
  flex: none;
  overflow: hidden;
  border-top: 1px solid #6f8fc8;
  box-sizing: border-box;
}

.side-bar {
  margin: 3px 0 0;
  padding: 11px 17px 0 0;
  background: linear-gradient(90deg, #dbe8fc, #b4cdf6 50%, #7ea6e4);
  border-bottom: 1px solid #3b619c;
  position: relative;
}

.side-bar::before {
  content: "";
  position: absolute;
  left: 0;
  right: 4px;
  top: 2px;
  height: 2px;
  background: repeating-linear-gradient(90deg, #27418a 0 2px, transparent 2px 4px);
}

.side-bar button {
  width: 37px;
  height: 34px;
  display: flex;
  flex-direction: column;
  align-items: center;
  white-space: nowrap;
}

.side-bar button:last-child {
  height: 31px;
}

.side-bar button span {
  margin-top: -6px;
  line-height: 18px;
}

.side-bar .off {
  color: #8592ad;
}

.work {
  flex: 1;
  min-width: 0;
  display: flex;
  flex-direction: column;
}

.work-row {
  flex: 1;
  display: flex;
}

.features {
  width: 22px;
  flex: none;
  background: #fffde8;
}

.features button {
  writing-mode: vertical-rl;
  width: 20px;
  padding: 5px 0 4px;
  margin-top: 1px;
  background: #ebe8d8;
  border: solid #a8a698;
  border-width: 0 1px 1px 0;
  color: #6b6a60;
  font: bold 12px "Liberation Mono", monospace;
}

.canvas {
  flex: 1;
  position: relative;
  border-left: 1px solid #8c8c88;
  background: linear-gradient(#fff, #000);
}

.canvas::before {
  content: "";
  position: absolute;
  right: 0;
  bottom: 0;
  width: 100px;
  height: 7px;
  background: #a8a6a6;
}

.scene {
  position: absolute;
  inset: 0;
  width: 100%;
  height: 100%;
}

.ax {
  font: 12px "Open Sans", sans-serif;
}

.ucs {
  font-size: 13px;
}

/* --- program manager window --- */
.dialog {
  position: absolute;
  left: 0;
  top: 1px;
  width: 653px;
  height: 215px;
  display: flex;
  flex-direction: column;
  box-sizing: border-box;
  padding: 0 4px 4px;
  border: 1px solid #5a6cc4;
  border-left: 0;
  border-radius: 6px 6px 0 0;
  background: #7588d8;
}

.dlg-title {
  height: 28px;
  margin: 0 -4px;
  padding: 0 5px 0 7px;
  display: flex;
  align-items: center;
  justify-content: space-between;
  border-radius: 5px 5px 0 0;
  background: linear-gradient(#8fb4f0, #7a95e0 20%, #7d9ee6 80%, #86a0e8);
}

.dlg-title h1 {
  margin: 0;
  font-size: 12px;
  font-weight: bold;
  color: #d4e0fa;
}

.dlg-title h1 :deep(.lat) {
  font-size: 12px;
}

.dlg-title button {
  width: 21px;
  height: 21px;
  display: flex;
  align-items: center;
  justify-content: center;
  box-sizing: border-box;
  border: 1px solid #fff;
  border-radius: 3px;
  background: #b8687e;
}

.dlg-body {
  flex: 1;
  background: #fff;
  border-top: 1px solid #6b6b6b;
  border-left: 1px solid #6b6b6b;
}

table {
  width: 488px;
  table-layout: fixed;
  border-collapse: collapse;
  line-height: 13px;
  font-size: 11px;
}

.w12 { width: 12px; }
.w16 { width: 16px; }
.w17 { width: 17px; }
.w32 { width: 32px; }
.w43 { width: 43px; }
.w46 { width: 46px; }
.w50 { width: 50px; }
.w60 { width: 60px; }
.w72 { width: 72px; }
.w80 { width: 80px; }

th {
  height: 12px;
  padding: 0;
  line-height: 12px;
  font-weight: normal;
  color: #d8ffff;
  background: linear-gradient(#0a74f0, #0040d8);
  box-shadow: inset 1px 0 #a8f0f8;
  white-space: nowrap;
}

td {
  height: 15px;
  padding: 0;
  vertical-align: top;
  white-space: nowrap;
}

td svg {
  overflow: visible;
}

.st svg {
  margin-left: 18px;
}

.node {
  display: block;
  width: 9px;
  height: 9px;
  margin: 2px 0 0 2px;
  border: 1px solid #000;
  background: linear-gradient(#000, #000) center / 7px 1px no-repeat #fff;
}

.nm.child {
  padding-left: 2px;
}

.note {
  padding-left: 3px;
}

.cut,
.cs {
  padding-left: 2px;
}

.cs.dim {
  color: #777;
}

.swatch {
  display: block;
  width: 11px;
  height: 11px;
  margin: 1px 0 0 1px;
  border: 1px solid #9fd0d8;
  background: #00ffff;
}

.stroke {
  display: block;
  height: 1px;
  margin-top: 7px;
  background: #000;
}

.sel td:not(.st) {
  background: #ffcb00;
  box-shadow: inset 0 -2px #e01000;
}

/* --- bottom bars --- */
.monitor {
  height: 25px;
  padding-left: 24px;
  display: flex;
  align-items: flex-end;
  background: #fffde8;
}

.monitor button {
  height: 20px;
  padding: 0 3px;
  background: #ebe8d8;
  border: 1px solid #a8a698;
  border-bottom: 0;
  color: #6b6a60;
  font: bold 12px "Liberation Mono", monospace;
}

.status {
  height: 20px;
  display: flex;
  gap: 2px;
  justify-content: flex-end;
  box-sizing: border-box;
  padding: 2px 3px 1px;
  background: #ebe8d8;
}

.status > span {
  border: 1px solid #c4d4e4;
  line-height: 15px;
}

.status .wide {
  width: 118px;
  padding-left: 2px;
}

.status .key {
  min-width: 22px;
  padding: 0 1px;
}

.status .off {
  color: #aaa898;
}

.net {
  position: absolute;
  right: 0;
  bottom: 10px;
  width: 93px;
  height: 38px;
  display: flex;
  align-items: center;
  gap: 4px;
  box-sizing: border-box;
  padding: 0 11px 0 2px;
  border-radius: 19px;
  background: linear-gradient(#fff, #f4f4f4 70%, #dcdcdc);
  box-shadow: 0 0 2px #888;
}

.net b {
  width: 34px;
  height: 34px;
  flex: none;
  border-radius: 50%;
  text-align: center;
  font-weight: normal;
  font-size: 11px;
  line-height: 34px;
  color: #4a2a10;
  background: linear-gradient(#e8ece4 45%, #9ae838 45%, #6cc81c);
  box-shadow: inset 0 0 2px #777;
}

.net div {
  flex: 1;
}

.net p {
  display: flex;
  justify-content: space-between;
  align-items: center;
  margin: 0;
  font-size: 9px;
  line-height: 16px;
}

.taskbar {
  height: 29px;
  display: flex;
  align-items: center;
  color: #fff;
  background: linear-gradient(#5a9cf4, #2b62dc 15%, #2259d8 85%, #1a44b0);
}

.start {
  width: 81px;
  height: 29px;
  display: flex;
  align-items: center;
  gap: 7px;
  border-radius: 0 8px 10px 0;
  background: linear-gradient(#6ab868, #3a9a3c 20%, #3ea03e 80%, #2a7a2c);
}

.start svg {
  margin-left: -3px;
}

.start em {
  font-size: 19px;
  line-height: 28px;
  white-space: nowrap;
  text-shadow: 1px 1px 1px #1c5a1c;
}

.quick {
  width: 41px;
  height: 23px;
  margin: 0 7px 0 4px;
  display: flex;
  align-items: center;
  justify-content: center;
  box-sizing: border-box;
  border: 1px solid #4a80e8;
  border-radius: 2px;
}

.launch {
  display: flex;
  gap: 7px;
}

.more {
  width: 28px;
  text-align: center;
  height: 26px;
}

.task {
  width: 158px;
  height: 24px;
  margin-right: 2px;
  padding-left: 9px;
  display: flex;
  align-items: center;
  gap: 4px;
  box-sizing: border-box;
  border-radius: 3px;
  background: linear-gradient(#6aa4fa, #3c80f0 15%, #3a7cee 85%, #2c66d8);
}

.task.active {
  background: #1c4cb4;
  box-shadow: inset 1px 1px 2px #0c2c78;
}

.tray-icons {
  margin-left: auto;
  display: flex;
  gap: 7px;
  align-items: center;
}

.tray {
  height: 29px;
  margin-left: 16px;
  padding-right: 12px;
  display: flex;
  align-items: center;
  gap: 7px;
  background: linear-gradient(#50b8f8, #128ce8 15%, #1090ea 85%, #0c70c0);
}

.tray button {
  margin-left: -9px;
}

.tray time {
  font: 10px "DejaVu Sans Mono", monospace;
}

.mark {
  height: 28px;
  margin-right: 19px;
  display: flex;
  align-items: center;
  justify-content: flex-end;
  color: #fff;
  line-height: 20px;
  -webkit-text-stroke: 3px #e02828;
  paint-order: stroke fill;
}

.mark i {
  font-size: 18px;
}

.mark b {
  font: bold 15px "DejaVu Sans", sans-serif;
}
</style>
